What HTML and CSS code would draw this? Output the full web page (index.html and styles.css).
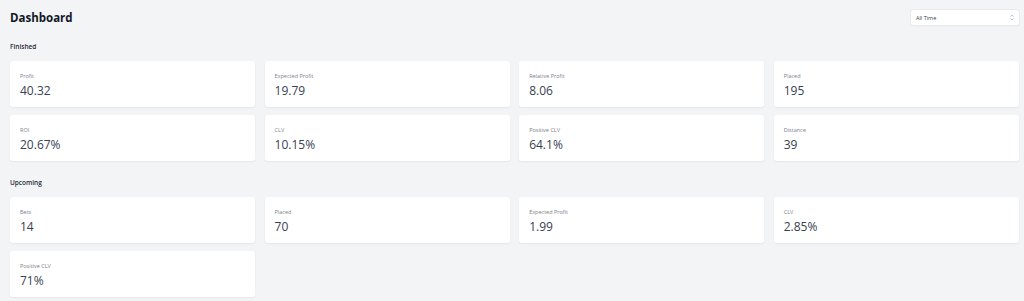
FILE: index.html
```html
<!DOCTYPE html>
<html lang="en">
<head>
<meta charset="utf-8">
<title>Dashboard</title>
<link rel="stylesheet" href="styles.css">
</head>
<body>
<div class="page">
  <header class="header">
    <h1 class="title">Dashboard</h1>
    <div class="select">
      <span>All Time</span>
      <svg class="chev" viewBox="0 0 6 10" width="4" height="7" aria-hidden="true"><path d="M1 3.5 L3 1.5 L5 3.5 M1 6.5 L3 8.5 L5 6.5" fill="none" stroke="#9ca3af" stroke-width="1.2"/></svg>
    </div>
  </header>

  <h2 class="section">Finished</h2>
  <div class="grid">
    <div class="card"><div class="label">Profit</div><div class="value">40.32</div></div>
    <div class="card"><div class="label">Expected Profit</div><div class="value">19.79</div></div>
    <div class="card"><div class="label">Relative Profit</div><div class="value">8.06</div></div>
    <div class="card"><div class="label">Placed</div><div class="value">195</div></div>
    <div class="card"><div class="label">ROI</div><div class="value">20.67%</div></div>
    <div class="card"><div class="label">CLV</div><div class="value">10.15%</div></div>
    <div class="card"><div class="label">Positive CLV</div><div class="value">64.1%</div></div>
    <div class="card"><div class="label">Distance</div><div class="value">39</div></div>
  </div>

  <h2 class="section section-2">Upcoming</h2>
  <div class="grid">
    <div class="card"><div class="label">Bets</div><div class="value">14</div></div>
    <div class="card"><div class="label">Placed</div><div class="value">70</div></div>
    <div class="card"><div class="label">Expected Profit</div><div class="value">1.99</div></div>
    <div class="card"><div class="label">CLV</div><div class="value">2.85%</div></div>
    <div class="card"><div class="label">Positive CLV</div><div class="value">71%</div></div>
  </div>
</div>
</body>
</html>
```
FILE: styles.css
```css
* { box-sizing: border-box; }
html, body {
  margin: 0;
  padding: 0;
  background: #f3f4f6;
  font-family: "Open Sans", "Noto Sans", sans-serif;
}
.page {
  padding: 8px 5px 4px 10px;
}
.header {
  display: flex;
  justify-content: space-between;
  align-items: center;
  height: 19px;
}
.title {
  margin: 0;
  font-size: 11.5px;
  font-weight: 700;
  color: #111827;
  line-height: 19px;
}
.select {
  width: 108px;
  height: 15px;
  background: #fff;
  border-radius: 3px;
  box-shadow: 0 0 0 1px #e8eaee, 0 1px 2px rgba(0,0,0,0.05);
  display: flex;
  align-items: center;
  justify-content: space-between;
  padding: 0 5px 0 5px;
  font-size: 5.5px;
  color: #374151;
}
.chev { display: block; }
.section {
  margin: 15px 0 9px 0;
  font-size: 6.5px;
  line-height: 10px;
  font-weight: 600;
  color: #1f2937;
}
.section-2 { margin-top: 17px; }
.grid {
  display: grid;
  grid-template-columns: repeat(4, 1fr);
  column-gap: 9.3px;
  row-gap: 8px;
}
.card {
  background: #fff;
  border-radius: 3px;
  box-shadow: 0 1px 2px rgba(0,0,0,0.06);
  height: 46px;
  padding: 11px 10px 9px;
}
.label {
  font-size: 5.5px;
  line-height: 8px;
  color: #7b818c;
}
.value {
  margin-top: 3px;
  font-size: 12px;
  line-height: 15px;
  font-weight: 500;
  color: #374151;
}
```
